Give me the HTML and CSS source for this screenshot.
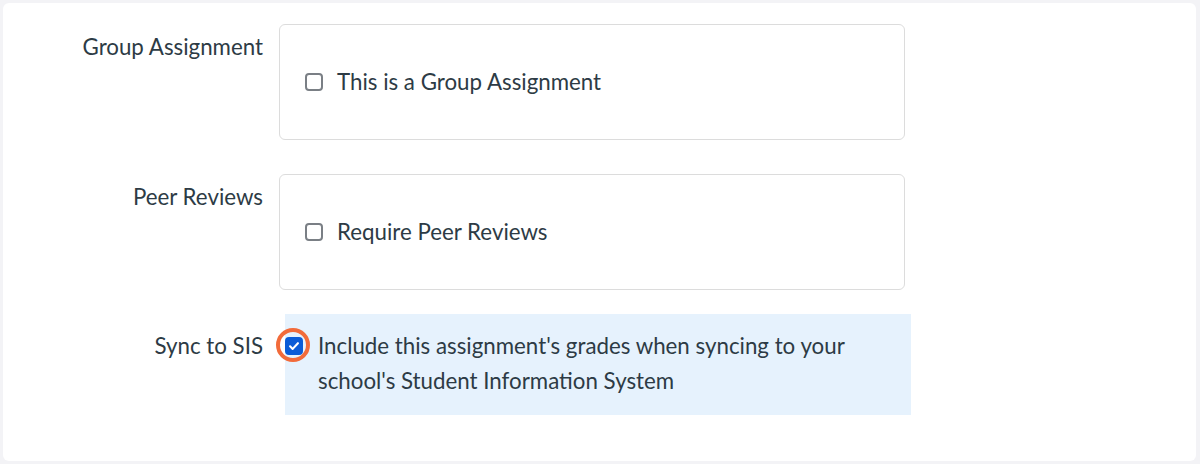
FILE: index.html
```html
<!DOCTYPE html>
<html lang="en">
<head>
<meta charset="utf-8">
<link rel="stylesheet" href="styles.css">
</head>
<body>
<div class="card">
  <div class="row">
    <div class="label">Group Assignment</div>
    <div class="box">
      <label class="check"><span class="cb"></span><span>This is a Group Assignment</span></label>
    </div>
  </div>
  <div class="row">
    <div class="label">Peer Reviews</div>
    <div class="box">
      <label class="check"><span class="cb"></span><span>Require Peer Reviews</span></label>
    </div>
  </div>
  <div class="row sync">
    <div class="label">Sync to SIS</div>
    <div class="highlight">
      <span class="cb-wrap">
        <span class="cb checked">
          <svg viewBox="0 0 16 16" width="14" height="14"><path d="M3.5 8.3l3 3 6-6.5" fill="none" stroke="#fff" stroke-width="2.4" stroke-linecap="round" stroke-linejoin="round"/></svg>
        </span>
        <span class="ring"></span>
      </span>
      <span class="sync-text">Include this assignment's grades when syncing to your school's Student Information System</span>
    </div>
  </div>
</div>
</body>
</html>
```
FILE: styles.css
```css
html, body {
  margin: 0;
  padding: 0;
  background: #f3f3f6;
}
body {
  padding: 3px;
  font-family: Lato, "Noto Sans", sans-serif;
  color: #2d3b45;
  font-size: 22.3px;
}
.card {
  background: #ffffff;
  border-radius: 6px;
  height: 458px;
  box-sizing: border-box;
  padding-top: 21px;
  width: 1193px;
}
.row {
  display: flex;
  gap: 16px;
  margin-bottom: 34px;
}
.row.sync {
  margin-top: -10px;
  gap: 22px;
}
.label {
  width: 260px;
  flex: none;
  text-align: right;
  line-height: 30px;
  padding-top: 8px;
}
.row.sync .label {
  padding-top: 17px;
}
.box {
  width: 626px;
  height: 116px;
  box-sizing: border-box;
  border: 1px solid #dcdcdc;
  border-radius: 6px;
  display: flex;
  align-items: center;
  padding-left: 25px;
}
.check {
  display: flex;
  align-items: center;
  gap: 14px;
  line-height: 30px;
}
.cb {
  width: 18px;
  height: 18px;
  box-sizing: border-box;
  border: 2px solid #7a7f85;
  border-radius: 4px;
  flex: none;
  display: inline-flex;
  align-items: center;
  justify-content: center;
}
.cb.checked {
  background: #0b5cd7;
  border-color: #0b5cd7;
}
.highlight {
  width: 626px;
  height: 101px;
  box-sizing: border-box;
  background: #e6f2fd;
  display: flex;
  align-items: flex-start;
  padding: 15px 20px 0 0;
  gap: 15px;
}
.cb-wrap {
  position: relative;
  width: 18px;
  height: 18px;
  margin-top: 8px;
  flex: none;
  display: flex;
}
.ring {
  position: absolute;
  left: -9px;
  top: -9px;
  width: 34px;
  height: 34px;
  box-sizing: border-box;
  border: 4.5px solid #f26b3a;
  border-radius: 50%;
}
.sync-text {
  line-height: 35px;
  margin-top: -1px;
}
```
